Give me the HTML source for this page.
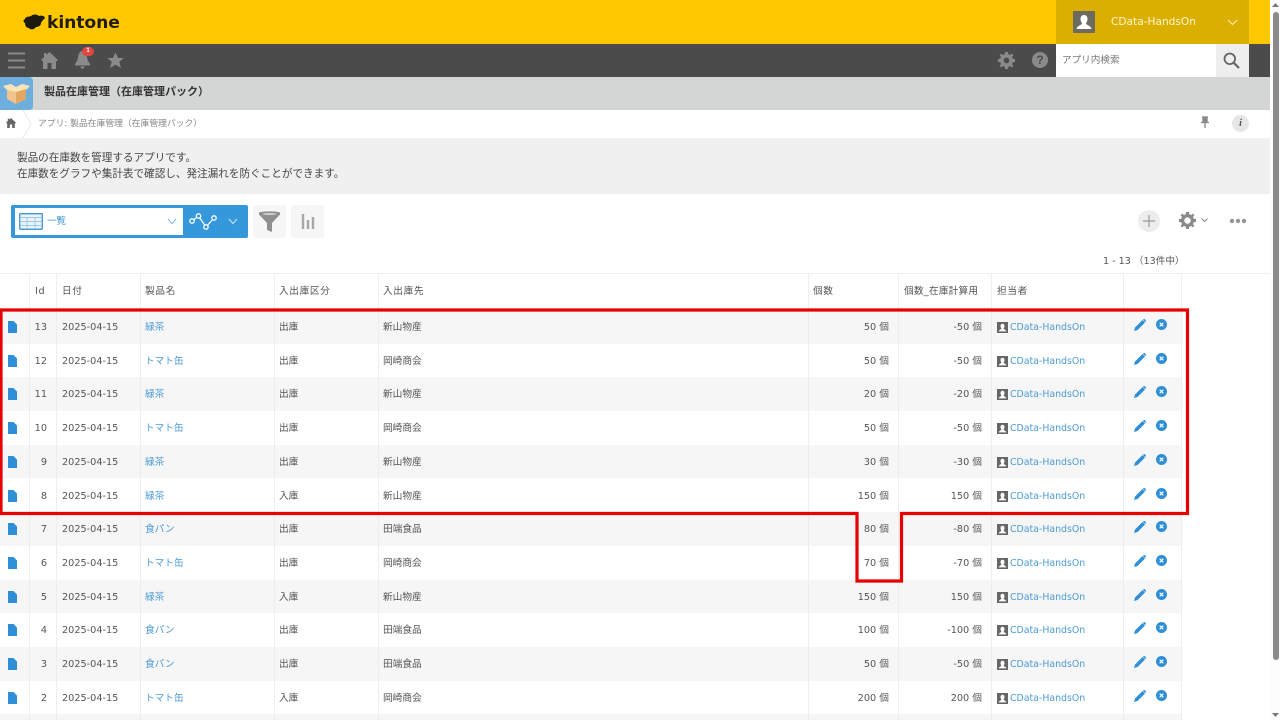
<!DOCTYPE html>
<html lang="ja"><head><meta charset="utf-8"><title>kintone</title>
<style>
html,body{margin:0;padding:0;width:1280px;height:720px;overflow:hidden;background:#fff}
body{position:relative;font-family:"DejaVu Sans","Noto Sans CJK JP",sans-serif;font-size:9.7px;color:#555}
.a{position:absolute}
.t{position:absolute;white-space:nowrap;line-height:14px}
.r{position:absolute;left:0;width:1181px;height:33.7px}
.r.o{background:#f6f6f6}
.r span{position:absolute;top:11px;line-height:14px;white-space:nowrap;color:#555}
.r .l{color:#4c9bd6}
.v{position:absolute;top:274px;width:1px;height:446px;background:#eeeeee}
.h{position:absolute;top:285px;line-height:14px;color:#555;letter-spacing:.6px}
.ic{position:absolute}
.d{left:8px;top:11px;width:9px;height:12px}
.u{left:997px;top:12px;width:11px;height:11px}
.p{left:1134px;top:9px;width:12px;height:12px}
.x{left:1156px;top:9px;width:11px;height:11px}
.id{width:18px;left:29px;text-align:right}
.dt{left:62px}.nm{left:145px}.kb{left:279px}.sk{left:383px}
.q{left:790px;width:99px;text-align:right}
.c{left:880px;width:102px;text-align:right}
.r .tan{left:1010px;font-size:9.4px}
</style></head><body>

<!-- top bar -->
<div class="a" style="left:0;top:0;width:1270px;height:44px;background:#ffc800"></div>
<div class="a" style="left:1056px;top:0;width:193px;height:44px;background:#dbaf00"></div>
<svg class="a" style="left:23px;top:13px" width="24" height="18" viewBox="0 0 24 18"><path d="M2 6C3 3 6 4 8 3C10 1 14 1 16 3C18 2 22 3 22 5C20 7 19 8 18 10C18 13 15 14 13 14C11 17 7 17 6 15C3 15 2 12 2 10C0 9 0 7 2 6Z" fill="#1d1a10"/></svg>
<div class="t" style="left:47px;top:13px;font:bold 17.2px/20px 'DejaVu Sans',sans-serif;color:#221d0a;letter-spacing:-.1px">kintone</div>
<svg class="a" style="left:1073px;top:11px" width="22" height="22" viewBox="0 0 22 22"><rect width="22" height="22" fill="#6d6a62"/><path d="M11 4C8.500 4 7.500 6 7.500 8C7.500 10 8.500 11.500 9 12.500C9 14 4 14.500 3.500 18H18.500C18 14.500 13 14 13 12.500C13.500 11.500 14.500 10 14.500 8C14.500 6 13.500 4 11 4Z" fill="#fff"/></svg>
<div class="t" style="left:1111px;top:15px;font-size:10.6px;color:#fff6cc">CData-HandsOn</div>
<svg class="a" style="left:1227px;top:19px" width="11" height="7" viewBox="0 0 11 7"><path d="M1 1L5.500 5.500L10 1" fill="none" stroke="#fff2bb" stroke-width="1"/></svg>

<!-- dark nav -->
<div class="a" style="left:0;top:44px;width:1270px;height:33px;background:#4b4b4b"></div>
<svg class="a" style="left:8px;top:52px" width="17" height="18" viewBox="0 0 17 18"><path d="M0 1.500H17M0 8.500H17M0 15.500H17" stroke="#8a8a8a" stroke-width="2"/></svg>
<svg class="a" style="left:41px;top:52px" width="17" height="17" viewBox="0 0 17 17"><path d="M8.500 0L17 8L15.500 9.300L15 9V17H10.500V11H6.500V17H2V9L1.500 9.300L0 8L3 5.200V1H5.500V2.900Z" fill="#8a8a8a"/></svg>
<svg class="a" style="left:74px;top:50px" width="17" height="19" viewBox="0 0 17 19"><path d="M8.500 1C11 1 12.500 3.500 13 7C13.300 10 14.500 12 16 14V15.500H1V14C2.500 12 3.700 10 4 7C4.500 3.500 6 1 8.500 1ZM6.500 16.500H10.500C10.500 18 9.500 18.700 8.500 18.700C7.500 18.700 6.500 18 6.500 16.500Z" fill="#8a8a8a"/></svg>
<div class="a" style="left:82px;top:47px;width:12px;height:9px;border-radius:5px;background:#e2463f;color:#fff;font:bold 6px/9px 'Liberation Sans',sans-serif;text-align:center">1</div>
<svg class="a" style="left:107px;top:52px" width="17" height="17" viewBox="0 0 17 17"><path d="M8.500 0.500L11 6H16.800L12.300 9.800L13.900 16L8.500 12.600L3.100 16L4.700 9.800L0.200 6H6Z" fill="#8a8a8a"/></svg>
<svg class="a" style="left:998px;top:52px" width="17" height="17" viewBox="0 0 24 24"><path d="M10 0H14L14.600 3.200L17 4.200L19.700 2.300L21.700 4.300L19.800 7L20.800 9.400L24 10V14L20.800 14.600L19.800 17L21.700 19.700L19.700 21.700L17 19.800L14.600 20.800L14 24H10L9.400 20.800L7 19.800L4.300 21.700L2.300 19.700L4.200 17L3.200 14.600L0 14V10L3.200 9.400L4.200 7L2.300 4.300L4.300 2.300L7 4.200L9.400 3.200ZM12 8A4 4 0 1 0 12 16A4 4 0 1 0 12 8Z" fill="#8a8a8a" fill-rule="evenodd"/></svg>
<div class="a" style="left:1032px;top:52px;width:16px;height:16px;border-radius:50%;background:#8a8a8a;color:#4b4b4b;font:bold 12px/16px 'Liberation Sans',sans-serif;text-align:center">?</div>
<div class="a" style="left:1056px;top:44px;width:160px;height:33px;background:#fff"></div>
<div class="t" style="left:1062px;top:53px;font-size:9.6px;line-height:15px;color:#777">アプリ内検索</div>
<div class="a" style="left:1216px;top:44px;width:33px;height:33px;background:#eee"></div>
<svg class="a" style="left:1223px;top:52px" width="17" height="17" viewBox="0 0 17 17"><circle cx="6.800" cy="6.800" r="5.300" fill="none" stroke="#666" stroke-width="1.800"/><path d="M10.800 10.800L16 16" stroke="#666" stroke-width="2.200"/></svg>

<!-- app title -->
<div class="a" style="left:0;top:77px;width:1270px;height:33px;background:#d4d6d6"></div>
<div class="a" style="left:0;top:77px;width:33px;height:33px;background:#6eaede;border-radius:0 4px 4px 0"></div>
<svg class="a" style="left:2px;top:84px" width="29" height="20" viewBox="0 0 29 20"><path d="M5 5L14 8L24 5V15L14 20L5 15Z" fill="#f2c489"/><path d="M1 2L9 0L14 3L20 0L28 2L24 6L14 8L5 6Z" fill="#fbe2b8"/><path d="M14 8V20L24 15V5Z" fill="#e2a862"/></svg>
<div class="t" style="left:44px;top:85px;font-size:11px;font-weight:bold;color:#333;font-family:'Liberation Sans','Noto Sans CJK JP',sans-serif">製品在庫管理（在庫管理パック）</div>

<!-- breadcrumb -->
<svg class="a" style="left:6px;top:118px" width="10" height="10" viewBox="0 0 17 17"><path d="M8.500 0L17 8L15.500 9.300L15 9V17H10.500V11H6.500V17H2V9L1.500 9.300L0 8L3 5.200V1H5.500V2.900Z" fill="#666"/></svg>
<svg class="a" style="left:22px;top:110px" width="10" height="28" viewBox="0 0 10 28"><path d="M1 0L9 14L1 28" fill="none" stroke="#e8e8e8"/></svg>
<div class="t" style="left:38px;top:117px;font-size:8.8px;color:#888">アプリ: 製品在庫管理（在庫管理パック）</div>
<svg class="a" style="left:1200px;top:116px" width="10" height="13" viewBox="0 0 10 13"><path d="M2 1H8M3 1V6H7V1M1 6.500H9M5 7V12" stroke="#888" stroke-width="1.300" fill="#888"/></svg>
<div class="a" style="left:1232px;top:115px;width:17px;height:17px;border-radius:50%;background:#e6e6e6;color:#555;font:italic bold 10px/17px 'Liberation Serif',serif;text-align:center">i</div>

<!-- description -->
<div class="a" style="left:0;top:138px;width:1270px;height:56px;background:#f0f0f0"></div>
<div class="t" style="left:17px;top:149.500px;font-size:10.6px;line-height:16px;color:#444">製品の在庫数を管理するアプリです。<br>在庫数をグラフや集計表で確認し、発注漏れを防ぐことができます。</div>

<!-- view selector -->
<div class="a" style="left:11px;top:205px;width:237px;height:33px;background:#3498db;border-radius:2px"></div>
<div class="a" style="left:15px;top:208px;width:168px;height:27px;background:#fff"></div>
<svg class="a" style="left:19px;top:213px" width="24" height="17" viewBox="0 0 24 17"><rect x=".7" y=".7" width="22.600" height="15.600" rx="1" fill="#e9f3fb" stroke="#3f94d2" stroke-width="1.300"/><path d="M1 4.500H23M1 8.500H23M1 12.500H23M8 4.500V16M16 4.500V16" stroke="#8cbde3" stroke-width=".8"/></svg>
<div class="t" style="left:47px;top:215px;font-size:9.5px;color:#3f94d2">一覧</div>
<svg class="a" style="left:167px;top:218px" width="10" height="7" viewBox="0 0 10 7"><path d="M1 1L5 5.500L9 1" fill="none" stroke="#7fb7e2"/></svg>
<svg class="a" style="left:189px;top:212px" width="30" height="20" viewBox="0 0 30 20"><path d="M3 9L9.500 4L17 15L25 6" fill="none" stroke="#fff" stroke-width="1.200"/><g fill="#3498db" stroke="#fff" stroke-width="1.300"><circle cx="3" cy="9" r="2.200"/><circle cx="9.500" cy="4" r="2.200"/><circle cx="17" cy="15" r="2.200"/><circle cx="25" cy="6" r="2.200"/></g></svg>
<svg class="a" style="left:228px;top:218px" width="10" height="7" viewBox="0 0 10 7"><path d="M1 1L5 5.500L9 1" fill="none" stroke="#cfe6f7"/></svg>
<div class="a" style="left:253px;top:205px;width:33px;height:33px;background:#f6f6f6;border-radius:3px"></div>
<svg class="a" style="left:259px;top:211px" width="21" height="22" viewBox="0 0 21 22"><path d="M0 1.500C3 0 18 0 21 1.500V3.500L13 12V21L8 19V12L0 3.500Z" fill="#8f8f8f"/><ellipse cx="10.500" cy="3" rx="7" ry="1" fill="#cfcfcf"/></svg>
<div class="a" style="left:291px;top:205px;width:33px;height:33px;background:#f6f6f6;border-radius:3px"></div>
<svg class="a" style="left:301px;top:213px" width="14" height="17" viewBox="0 0 14 17"><path d="M2 1V16M7 7V16M12 4V16" stroke="#a8a8a8" stroke-width="2.400"/></svg>

<!-- right tools -->
<div class="a" style="left:1138px;top:210px;width:22px;height:22px;border-radius:50%;background:#ededed"></div>
<svg class="a" style="left:1143px;top:215px" width="12" height="12" viewBox="0 0 12 12"><path d="M6 0V12M0 6H12" stroke="#a5a5a5" stroke-width="1.400"/></svg>
<svg class="a" style="left:1179px;top:212px" width="17" height="17" viewBox="0 0 24 24"><path d="M10 0H14L14.600 3.200L17 4.200L19.700 2.300L21.700 4.300L19.800 7L20.800 9.400L24 10V14L20.800 14.600L19.800 17L21.700 19.700L19.700 21.700L17 19.800L14.600 20.800L14 24H10L9.400 20.800L7 19.800L4.300 21.700L2.300 19.700L4.200 17L3.200 14.600L0 14V10L3.200 9.400L4.200 7L2.300 4.300L4.300 2.300L7 4.200L9.400 3.200ZM12 7.500A4.500 4.500 0 1 0 12 16.500A4.500 4.500 0 1 0 12 7.500Z" fill="#8a8a8a" fill-rule="evenodd"/></svg>
<svg class="a" style="left:1201px;top:218px" width="7" height="5" viewBox="0 0 7 5"><path d="M.5 .5L3.500 3.500L6.500 .5" fill="none" stroke="#888"/></svg>
<svg class="a" style="left:1229px;top:218px" width="18" height="6" viewBox="0 0 18 6"><g fill="#959595"><circle cx="3" cy="3" r="2.200"/><circle cx="9" cy="3" r="2.200"/><circle cx="15" cy="3" r="2.200"/></g></svg>
<div class="t" style="left:1103px;top:254.500px;font-size:9.6px;color:#555">1 - 13 （13件中）</div>

<!-- table -->
<div class="a" style="left:0;top:273px;width:1270px;height:1px;background:#f0f0f0"></div>
<div class="r o" style="top:310px"></div>
<div class="r o" style="top:377.400px"></div>
<div class="r o" style="top:444.800px"></div>
<div class="r o" style="top:512.200px"></div>
<div class="r o" style="top:579.600px"></div>
<div class="r o" style="top:647px"></div>
<div class="r o" style="top:714.400px"></div>

<div class="v" style="left:29px"></div><div class="v" style="left:56px"></div><div class="v" style="left:140px"></div><div class="v" style="left:274px"></div><div class="v" style="left:378px"></div><div class="v" style="left:808px"></div><div class="v" style="left:898px"></div><div class="v" style="left:991px"></div><div class="v" style="left:1123px"></div><div class="v" style="left:1181px"></div>

<div class="h" style="left:35px">Id</div>
<div class="h" style="left:62px">日付</div>
<div class="h" style="left:145px">製品名</div>
<div class="h" style="left:279px">入出庫区分</div>
<div class="h" style="left:383px">入出庫先</div>
<div class="h" style="left:813px">個数</div>
<div class="h" style="left:904px;letter-spacing:.2px">個数_在庫計算用</div>
<div class="h" style="left:997px">担当者</div>

<svg width="0" height="0" style="position:absolute"><defs>
<symbol id="doc" viewBox="0 0 9 12"><path d="M0 0H5.500L9 3.500V12H0Z" fill="#2f8fd6"/></symbol>
<symbol id="usr" viewBox="0 0 11 11"><rect width="11" height="11" fill="#666"/><path d="M5.500 1.800C4 1.800 3.500 3 3.500 4.100C3.500 5.200 4.100 6 4.400 6.600C4.400 7.400 2 7.700 1.700 9.400H9.300C9 7.700 6.600 7.400 6.600 6.600C6.900 6 7.500 5.200 7.500 4.100C7.500 3 7 1.800 5.500 1.800Z" fill="#fff"/></symbol>
<symbol id="pen" viewBox="0 0 12 12"><path d="M0 12L1 8.500L8.500 1L11 3.500L3.500 11Z M9.200 .4C9.800 -.1 10.400 -.1 11 .4L11.600 1C12.100 1.600 12.100 2.200 11.600 2.800L11.300 3L9 .7Z" fill="#2f8fd6"/></symbol>
<symbol id="del" viewBox="0 0 11 11"><circle cx="5.500" cy="5.500" r="5.500" fill="#2f8fd6"/><path d="M3.700 3.700L7.300 7.300M7.300 3.700L3.700 7.300" stroke="#fff" stroke-width="1.200"/></symbol>
</defs></svg>

<div class="r" style="top:310px"><svg class="ic d"><use href="#doc"/></svg><span class="id">13</span><span class="dt">2025-04-15</span><span class="nm l">緑茶</span><span class="kb">出庫</span><span class="sk">新山物産</span><span class="q">50 個</span><span class="c">-50 個</span><svg class="ic u"><use href="#usr"/></svg><span class="tan l">CData-HandsOn</span><svg class="ic p"><use href="#pen"/></svg><svg class="ic x"><use href="#del"/></svg></div>
<div class="r" style="top:343.700px"><svg class="ic d"><use href="#doc"/></svg><span class="id">12</span><span class="dt">2025-04-15</span><span class="nm l">トマト缶</span><span class="kb">出庫</span><span class="sk">岡崎商会</span><span class="q">50 個</span><span class="c">-50 個</span><svg class="ic u"><use href="#usr"/></svg><span class="tan l">CData-HandsOn</span><svg class="ic p"><use href="#pen"/></svg><svg class="ic x"><use href="#del"/></svg></div>
<div class="r" style="top:377.400px"><svg class="ic d"><use href="#doc"/></svg><span class="id">11</span><span class="dt">2025-04-15</span><span class="nm l">緑茶</span><span class="kb">出庫</span><span class="sk">新山物産</span><span class="q">20 個</span><span class="c">-20 個</span><svg class="ic u"><use href="#usr"/></svg><span class="tan l">CData-HandsOn</span><svg class="ic p"><use href="#pen"/></svg><svg class="ic x"><use href="#del"/></svg></div>
<div class="r" style="top:411.100px"><svg class="ic d"><use href="#doc"/></svg><span class="id">10</span><span class="dt">2025-04-15</span><span class="nm l">トマト缶</span><span class="kb">出庫</span><span class="sk">岡崎商会</span><span class="q">50 個</span><span class="c">-50 個</span><svg class="ic u"><use href="#usr"/></svg><span class="tan l">CData-HandsOn</span><svg class="ic p"><use href="#pen"/></svg><svg class="ic x"><use href="#del"/></svg></div>
<div class="r" style="top:444.800px"><svg class="ic d"><use href="#doc"/></svg><span class="id">9</span><span class="dt">2025-04-15</span><span class="nm l">緑茶</span><span class="kb">出庫</span><span class="sk">新山物産</span><span class="q">30 個</span><span class="c">-30 個</span><svg class="ic u"><use href="#usr"/></svg><span class="tan l">CData-HandsOn</span><svg class="ic p"><use href="#pen"/></svg><svg class="ic x"><use href="#del"/></svg></div>
<div class="r" style="top:478.500px"><svg class="ic d"><use href="#doc"/></svg><span class="id">8</span><span class="dt">2025-04-15</span><span class="nm l">緑茶</span><span class="kb">入庫</span><span class="sk">新山物産</span><span class="q">150 個</span><span class="c">150 個</span><svg class="ic u"><use href="#usr"/></svg><span class="tan l">CData-HandsOn</span><svg class="ic p"><use href="#pen"/></svg><svg class="ic x"><use href="#del"/></svg></div>
<div class="r" style="top:512.200px"><svg class="ic d"><use href="#doc"/></svg><span class="id">7</span><span class="dt">2025-04-15</span><span class="nm l">食パン</span><span class="kb">出庫</span><span class="sk">田端食品</span><span class="q">80 個</span><span class="c">-80 個</span><svg class="ic u"><use href="#usr"/></svg><span class="tan l">CData-HandsOn</span><svg class="ic p"><use href="#pen"/></svg><svg class="ic x"><use href="#del"/></svg></div>
<div class="r" style="top:545.900px"><svg class="ic d"><use href="#doc"/></svg><span class="id">6</span><span class="dt">2025-04-15</span><span class="nm l">トマト缶</span><span class="kb">出庫</span><span class="sk">岡崎商会</span><span class="q">70 個</span><span class="c">-70 個</span><svg class="ic u"><use href="#usr"/></svg><span class="tan l">CData-HandsOn</span><svg class="ic p"><use href="#pen"/></svg><svg class="ic x"><use href="#del"/></svg></div>
<div class="r" style="top:579.600px"><svg class="ic d"><use href="#doc"/></svg><span class="id">5</span><span class="dt">2025-04-15</span><span class="nm l">緑茶</span><span class="kb">入庫</span><span class="sk">新山物産</span><span class="q">150 個</span><span class="c">150 個</span><svg class="ic u"><use href="#usr"/></svg><span class="tan l">CData-HandsOn</span><svg class="ic p"><use href="#pen"/></svg><svg class="ic x"><use href="#del"/></svg></div>
<div class="r" style="top:613.300px"><svg class="ic d"><use href="#doc"/></svg><span class="id">4</span><span class="dt">2025-04-15</span><span class="nm l">食パン</span><span class="kb">出庫</span><span class="sk">田端食品</span><span class="q">100 個</span><span class="c">-100 個</span><svg class="ic u"><use href="#usr"/></svg><span class="tan l">CData-HandsOn</span><svg class="ic p"><use href="#pen"/></svg><svg class="ic x"><use href="#del"/></svg></div>
<div class="r" style="top:647px"><svg class="ic d"><use href="#doc"/></svg><span class="id">3</span><span class="dt">2025-04-15</span><span class="nm l">食パン</span><span class="kb">出庫</span><span class="sk">田端食品</span><span class="q">50 個</span><span class="c">-50 個</span><svg class="ic u"><use href="#usr"/></svg><span class="tan l">CData-HandsOn</span><svg class="ic p"><use href="#pen"/></svg><svg class="ic x"><use href="#del"/></svg></div>
<div class="r" style="top:680.700px"><svg class="ic d"><use href="#doc"/></svg><span class="id">2</span><span class="dt">2025-04-15</span><span class="nm l">トマト缶</span><span class="kb">入庫</span><span class="sk">岡崎商会</span><span class="q">200 個</span><span class="c">200 個</span><svg class="ic u"><use href="#usr"/></svg><span class="tan l">CData-HandsOn</span><svg class="ic p"><use href="#pen"/></svg><svg class="ic x"><use href="#del"/></svg></div>

<!-- red highlight -->
<svg class="a" style="left:0;top:0" width="1280" height="720"><path d="M1 310H1187.500V513.500H901.500V581H857V513.500H1V310Z" fill="none" stroke="#e60000" stroke-width="3.200"/></svg>

<!-- scrollbar -->
<div class="a" style="left:1270px;top:0;width:10px;height:720px;background:#fdfdfd"></div>
<div class="a" style="left:1272.500px;top:12px;width:6px;height:648px;background:#8a8a8a;border-radius:3px"></div>
<svg class="a" style="left:1272px;top:2px" width="7" height="6"><path d="M3.500 1L7 5H0Z" fill="#777"/></svg>
<svg class="a" style="left:1272px;top:712px" width="7" height="6"><path d="M0 1H7L3.500 5Z" fill="#777"/></svg>
</body></html>
